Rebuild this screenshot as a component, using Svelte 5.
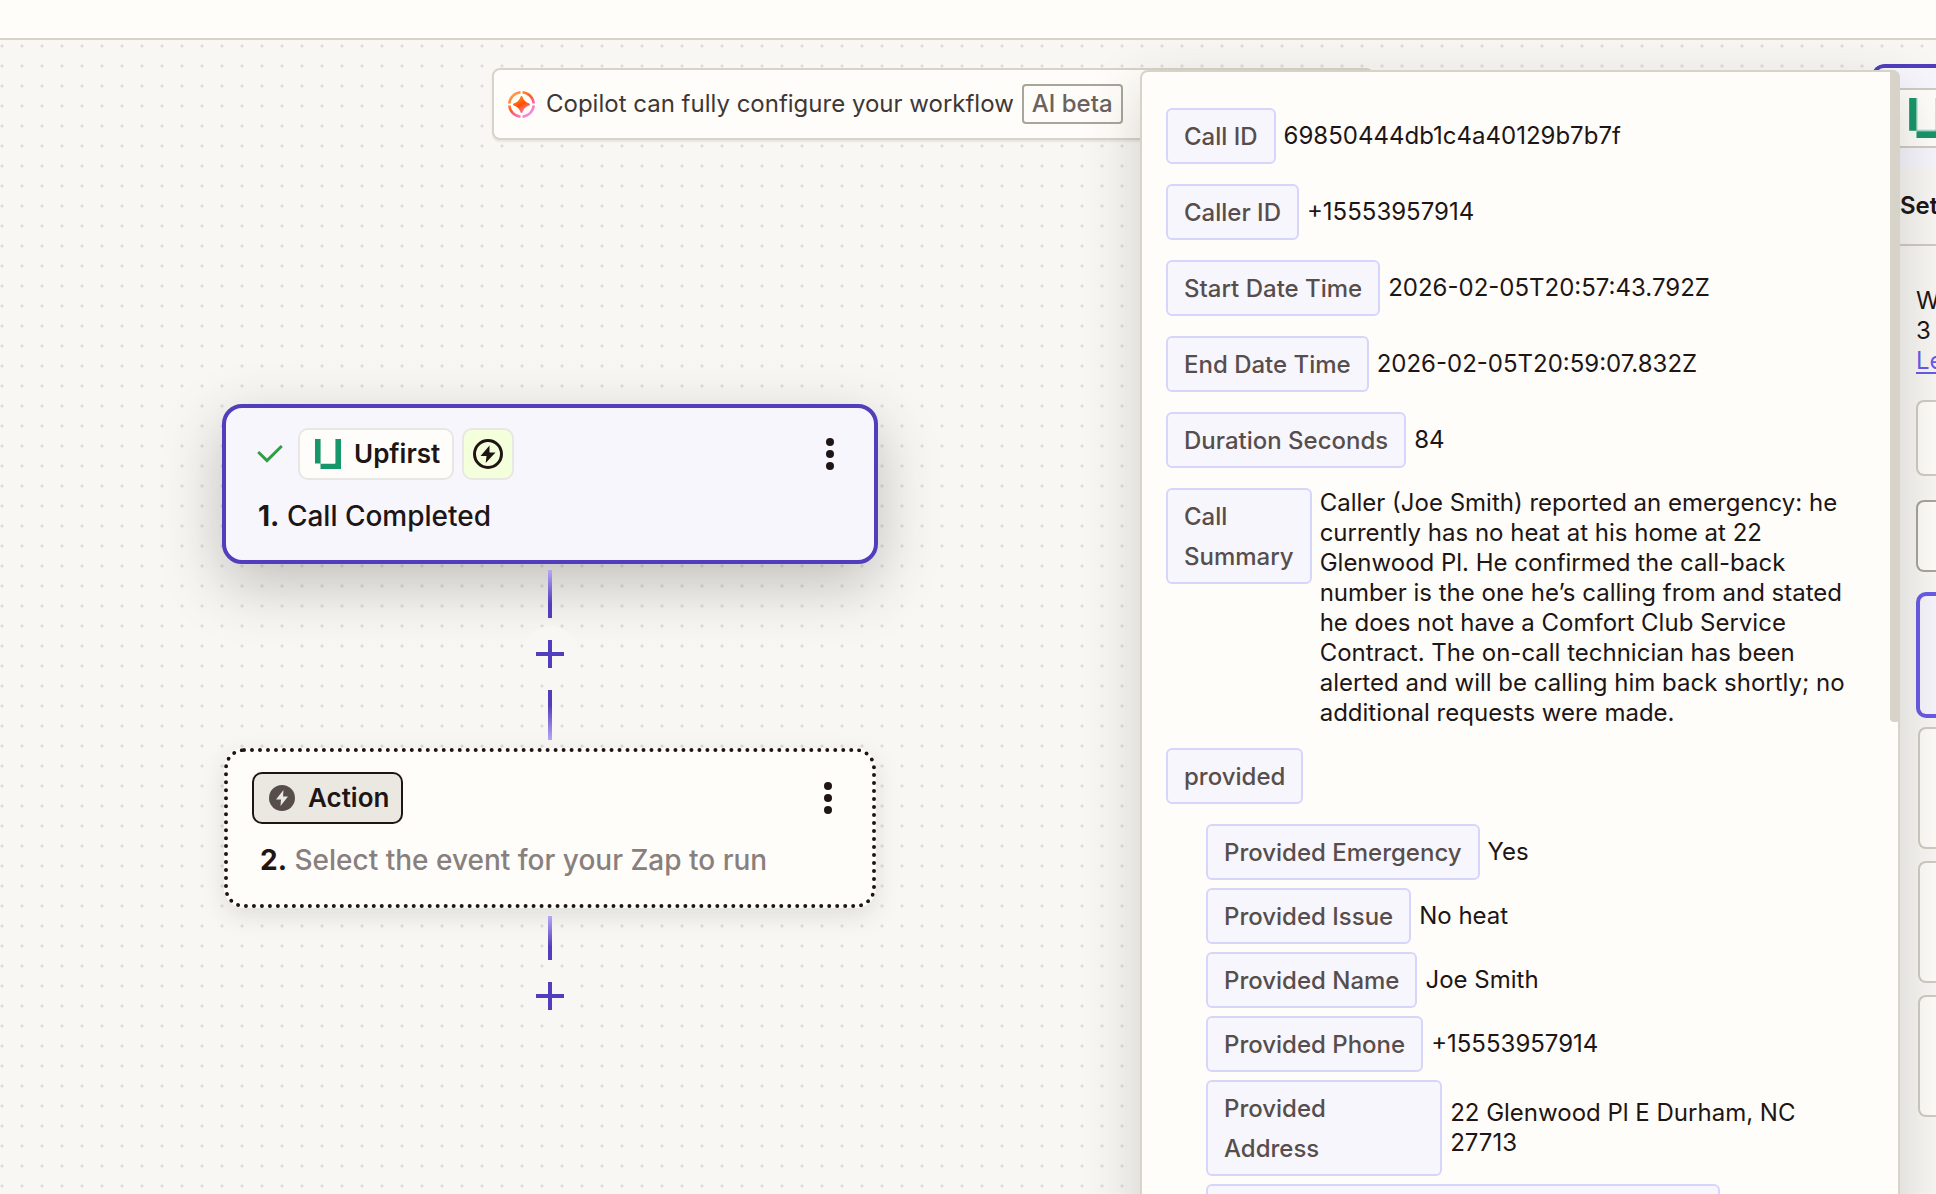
<script>
  const fields = [
    { label: 'Call ID', value: '69850444db1c4a40129b7b7f' },
    { label: 'Caller ID', value: '+15553957914' },
    { label: 'Start Date Time', value: '2026-02-05T20:57:43.792Z' },
    { label: 'End Date Time', value: '2026-02-05T20:59:07.832Z' },
    { label: 'Duration Seconds', value: '84' },
    {
      label: 'Call Summary',
      value:
        'Caller (Joe Smith) reported an emergency: he currently has no heat at his home at 22 Glenwood Pl. He confirmed the call-back number is the one he’s calling from and stated he does not have a Comfort Club Service Contract. The on-call technician has been alerted and will be calling him back shortly; no additional requests were made.',
      long: true
    }
  ];

  const provided = [
    { label: 'Provided Emergency', value: 'Yes' },
    { label: 'Provided Issue', value: 'No heat' },
    { label: 'Provided Name', value: 'Joe Smith' },
    { label: 'Provided Phone', value: '+15553957914' },
    { label: 'Provided Address', value: '22 Glenwood Pl E Durham, NC 27713' }
  ];

  const records = [1, 2, 3];
</script>

{#snippet logo()}
  <svg class="logo" viewBox="0 0 26 30" aria-hidden="true">
    <path d="M0 0h6v24.500H0zM20 0h6v30H5.500v-5H20z" fill="#17966a" />
    <path d="M5.200 0h.8v24.500h-.8zM20 0h.8v24.500H6v-.6h14z" fill="#8fcdb6" />
  </svg>
{/snippet}

{#snippet kebab()}
  <button class="kebab" aria-label="Step menu">
    <svg viewBox="0 0 8 32" aria-hidden="true">
      <circle cx="4" cy="4" r="4" />
      <circle cx="4" cy="16" r="4" />
      <circle cx="4" cy="28" r="4" />
    </svg>
  </button>
{/snippet}

{#snippet plus()}
  <button class="plus" aria-label="Add step">
    <svg viewBox="0 0 28 28" aria-hidden="true">
      <path d="M12 0h4v12h12v4H16v12h-4V16H0v-4h12z" fill="#503ebd" />
    </svg>
  </button>
{/snippet}

<div class="page">
  <header></header>

  <main>
    <div class="canvas">
      <div class="copilot">
        <svg class="spark" viewBox="0 0 27 27" aria-hidden="true">
          <defs>
            <linearGradient id="ring" gradientUnits="userSpaceOnUse" x1="4" y1="2" x2="22" y2="26">
              <stop offset="0" stop-color="#ffa64d" />
              <stop offset="0.45" stop-color="#ff5a1f" />
              <stop offset="0.6" stop-color="#ff5c8a" />
              <stop offset="1" stop-color="#f19bee" />
            </linearGradient>
            <linearGradient id="star" x1="0.2" y1="0" x2="0.8" y2="1">
              <stop offset="0" stop-color="#ff8a1f" />
              <stop offset="0.5" stop-color="#ff4f00" />
              <stop offset="1" stop-color="#f77fc5" />
            </linearGradient>
          </defs>
          <path
            d="M12.500 1.300A12.200 12.200 0 0 0 1.300 12.500M14.500 1.300A12.200 12.200 0 0 1 25.700 12.500M25.700 14.500A12.200 12.200 0 0 1 14.500 25.700M12.500 25.700A12.200 12.200 0 0 1 1.300 14.500"
            fill="none"
            stroke="url(#ring)"
            stroke-width="2.6"
          />
          <path
            d="M13.500 6C14.800 10.500 16.500 12.200 21 13.500C16.500 14.800 14.800 16.500 13.500 21C12.200 16.500 10.500 14.800 6 13.500C10.500 12.200 12.200 10.500 13.500 6Z"
            fill="url(#star)"
            stroke="url(#star)"
            stroke-width="2"
            stroke-linejoin="round"
          />
        </svg>
        <span>Copilot can fully configure your workflow</span>
        <span class="beta">AI beta</span>
      </div>

      <div class="flow">
        <section class="step selected">
          <div class="step-head">
            <svg class="check" viewBox="0 0 26 20" aria-hidden="true">
              <path d="M1.200 8l8.800 8.600L24.800 2" fill="none" stroke="#2f9e44" stroke-width="3" />
            </svg>
            <span class="pill app">{@render logo()}Upfirst</span>
            <span class="pill trigger">
              <svg viewBox="0 0 32 32" aria-hidden="true">
                <circle cx="16" cy="16" r="13.500" fill="none" stroke="#201515" stroke-width="3" />
                <path d="M17.500 7.500L8.500 18h6l-.8 7L23.500 14.500h-6z" fill="#201515" />
              </svg>
            </span>
            {@render kebab()}
          </div>
          <h2><b>1.</b> Call Completed</h2>
        </section>

        <div class="connector first">
          <i class="line down"></i>
          {@render plus()}
          <i class="line up"></i>
        </div>

        <section class="step empty">
          <div class="step-head">
            <button class="pill action">
              <svg viewBox="0 0 26 26" aria-hidden="true">
                <circle cx="13" cy="13" r="13" fill="#574e4c" />
                <path d="M14.500 5L7 14.500h5L11.500 21 19 11.500h-5z" fill="#ebe8e2" />
              </svg>
              Action
            </button>
            {@render kebab()}
          </div>
          <h2 class="muted"><b>2.</b> Select the event for your Zap to run</h2>
        </section>

        <div class="connector">
          <i class="line down"></i>
          {@render plus()}
        </div>
      </div>
    </div>

    <aside class="editor">
      <div class="editor-top">
        <div class="editor-app">{@render logo()}</div>
      </div>
      <div class="tabs">Set</div>
      <div class="editor-body">
        <p>W<br />3<br /><a href="#learn">Le</a></p>
        <div class="box search"></div>
        <div class="box find"></div>
        <div class="box active"></div>
        {#each records as record (record)}
          <div class="box record"></div>
        {/each}
      </div>
    </aside>

    <div class="popup">
      <ul class="fields">
        {#each fields as field}
          <li class:long={field.long}>
            <span class="chip">{field.label}</span>
            <span>{field.value}</span>
          </li>
        {/each}
        <li><span class="chip">provided</span></li>
      </ul>
      <ul class="fields nested">
        {#each provided as field}
          <li>
            <span class="chip">{field.label}</span>
            <span>{field.value}</span>
          </li>
        {/each}
        <li><span class="chip next"></span></li>
      </ul>
      <div class="thumb"></div>
    </div>
  </main>
</div>

<style>
  :global(body) {
    margin: 0;
    background: #f8f7f4;
  }

  .page {
    display: flex;
    flex-direction: column;
    min-height: 100vh;
    color: #201515;
    font-family: Inter, "Liberation Sans", sans-serif;
    font-size: 24px;
    line-height: 30px;
  }

  header {
    height: 38px;
    background: #fffdf9;
    border-bottom: 2px solid #d7d3c9;
  }

  main {
    position: relative;
    display: flex;
    flex: 1;
    overflow: hidden;
    background-color: #f8f7f4;
    background-image: radial-gradient(circle at 2px 6px, #dedcd7 1px, transparent 2px);
    background-size: 20px 20px;
  }

  button {
    margin: 0;
    padding: 0;
    border: none;
    background: none;
    color: inherit;
    font: inherit;
    cursor: pointer;
  }

  svg {
    display: block;
    flex: none;
  }

  .canvas {
    flex: 1;
    min-width: 0;
  }

  .copilot {
    display: flex;
    align-items: center;
    box-sizing: border-box;
    max-width: 882px;
    height: 72px;
    margin: 28px auto 0;
    padding: 0 14px;
    border: 2px solid #d7d3c9;
    border-radius: 8px;
    background: #fffdf9;
    box-shadow: 0 2px 2px rgba(32, 21, 21, 0.08);
    color: #403735;
  }

  .spark {
    width: 27px;
    height: 27px;
    margin-right: 11px;
  }

  .beta {
    margin-left: 8px;
    padding: 3px 8px;
    border: 2px solid #a8a59b;
    border-radius: 4px;
    color: #6b6260;
    font-weight: 500;
  }

  .flow {
    display: flex;
    flex-direction: column;
    align-items: center;
    width: 656px;
    margin: 264px 0 0 222px;
  }

  .step {
    box-sizing: border-box;
    height: 160px;
    border-radius: 20px;
  }

  .selected {
    width: 656px;
    padding: 20px 40px 0 31px;
    border: 4px solid #503ebd;
    background: #f7f6fd;
    box-shadow: 0 20px 60px rgba(45, 46, 36, 0.28);
  }

  .empty {
    width: 652px;
    padding: 20px 40px 0 24px;
    border: 4px dotted #201515;
    background: #fffdf9;
    box-shadow: 0 8px 24px rgba(45, 46, 36, 0.12);
  }

  .step-head {
    display: flex;
    align-items: center;
    gap: 8px;
  }

  .check {
    width: 26px;
    height: 20px;
    margin-right: 7px;
  }

  .pill {
    display: flex;
    align-items: center;
    box-sizing: border-box;
    height: 52px;
    border: 2px solid #e8e7e4;
    border-radius: 10px;
    font-size: 26px;
    font-weight: 600;
  }

  .app {
    gap: 13px;
    padding: 0 12px 0 15px;
    background: #fffdf9;
  }

  .logo {
    width: 26px;
    height: 30px;
  }

  .trigger {
    justify-content: center;
    width: 52px;
    background: #f4ffdb;
  }

  .trigger svg {
    width: 32px;
    height: 32px;
  }

  .action {
    gap: 13px;
    padding: 0 12px 0 15px;
    border-color: #201515;
    background: #ebe8e2;
  }

  .action svg {
    width: 26px;
    height: 26px;
  }

  .kebab {
    margin-left: auto;
  }

  .kebab svg {
    width: 8px;
    height: 32px;
    fill: #201515;
  }

  h2 {
    margin: 18px 0 0 1px;
    font-size: 28px;
    font-weight: 500;
    line-height: 36px;
  }

  h2 b {
    font-weight: 700;
  }

  .muted {
    margin-left: 8px;
    color: #88807e;
  }

  .muted b {
    color: #201515;
  }

  .connector {
    display: flex;
    flex-direction: column;
    align-items: center;
    gap: 8px;
    padding: 8px 0;
  }

  .first {
    padding-top: 6px;
  }

  .line {
    width: 4px;
    height: 48px;
  }

  .down {
    background: linear-gradient(#b5a9f5, #503ebd 70%);
  }

  .up {
    height: 50px;
    background: linear-gradient(#503ebd 30%, #b5a9f5);
  }

  .connector:last-child .line {
    height: 44px;
  }

  .plus {
    display: grid;
    place-items: center;
    width: 56px;
    height: 56px;
    border-radius: 50%;
    background: #f8f7f4;
  }

  .plus svg {
    width: 28px;
    height: 28px;
  }

  .editor {
    flex: none;
    align-self: flex-start;
    width: 64px;
    min-height: 1170px;
    margin: 24px 0 0 6px;
    border-radius: 12px 0 0 0;
    background: #f8f7f4;
    overflow: hidden;
  }

  .editor-top {
    padding: 20px 0 20px 22px;
    border-top: 4px solid #503ebd;
    border-left: 4px solid #503ebd;
    border-radius: 12px 0 0 0;
    background: #f7f6fd;
  }

  .editor-app {
    display: flex;
    align-items: center;
    height: 56px;
    padding-left: 11px;
    border: solid #d0cbc3;
    border-width: 2px 0;
    background: #fffdf9;
  }

  .editor-app .logo {
    width: 35px;
    height: 40px;
  }

  .tabs {
    padding: 23px 0 23px 28px;
    border-bottom: 2px solid #d0cbc3;
    font-weight: 600;
  }

  .editor-body {
    display: flex;
    flex-direction: column;
    padding-left: 44px;
  }

  .editor-body p {
    margin: 40px 0 24px;
  }

  .editor-body a {
    color: #695be8;
    text-underline-offset: 3px;
  }

  .box {
    box-sizing: border-box;
    border: 2px solid #d0cbc3;
    border-right: none;
    border-radius: 8px 0 0 8px;
    background: #fffdf9;
  }

  .search {
    height: 76px;
    margin-bottom: 24px;
  }

  .find {
    height: 72px;
    margin-bottom: 20px;
    border-color: #a8a59b;
  }

  .active {
    height: 126px;
    margin-bottom: 9px;
    border: 4px solid #695be8;
    border-right: none;
    border-radius: 10px 0 0 10px;
    background: #f7f6fd;
  }

  .record {
    height: 122px;
    margin: 0 0 12px 2px;
  }

  .popup {
    position: absolute;
    top: 30px;
    right: 36px;
    bottom: 0;
    box-sizing: border-box;
    width: 760px;
    padding: 36px 36px 0 24px;
    border: 2px solid #d7d3c9;
    border-bottom: none;
    border-radius: 8px 8px 0 0;
    background: #fffdf9;
    box-shadow: 0 20px 60px rgba(45, 46, 36, 0.2);
  }

  .fields {
    display: flex;
    flex-direction: column;
    gap: 20px;
    margin: 0;
    padding: 0;
    list-style: none;
  }

  .fields li {
    display: flex;
    align-items: center;
    gap: 8px;
  }

  .fields .long {
    align-items: flex-start;
  }

  .nested {
    gap: 8px;
    margin: 20px 0 0 40px;
  }

  .chip {
    padding: 7px 16px 5px;
    border: 2px solid #d6d5fb;
    border-radius: 6px;
    background: #f7f6fd;
    color: #574e4c;
    font-weight: 500;
    line-height: 40px;
  }

  .next {
    box-sizing: border-box;
    width: 514px;
    height: 56px;
  }

  .thumb {
    position: absolute;
    top: -2px;
    right: -2px;
    width: 10px;
    height: 652px;
    border-radius: 0 8px 4px 4px;
    background: #d7d3c9;
  }
</style>
